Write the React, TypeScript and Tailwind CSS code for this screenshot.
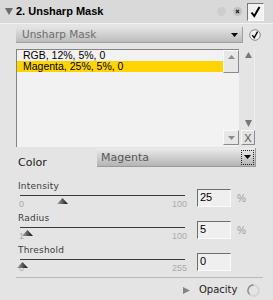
import React from 'react';

const Thumb: React.FC<{ id: string }> = ({ id }) => (
  <svg width="11" height="6" viewBox="0 0 11 6">
    <defs>
      <linearGradient id={id} x1="0" x2="1" y1="0" y2="0">
        <stop offset="0" stopColor="#a8a8a8" />
        <stop offset="1" stopColor="#0d0d0d" />
      </linearGradient>
    </defs>
    <path d="M0 6L5.5 0L11 6Z" fill={`url(#${id})`} />
  </svg>
);

type RowProps = { label: string; value: string; min: string; max: string; thumb: string; unit?: string; id: string };

const SliderRow: React.FC<RowProps> = ({ label, value, min, max, thumb, unit, id }) => (
  <div className="flex h-[32px]">
    <div className="ml-[18px] w-[170px] flex flex-col">
      <div className="text-[9px] leading-[11px] text-[#3c3c3c] tracking-[0.2px]">{label}</div>
      <div className="relative h-[21px]">
        <div className="absolute left-[2px] top-[3px] w-[165px] h-px bg-[#3a3a3a]" />
        <div className={`absolute top-[6px] ${thumb}`}>
          <Thumb id={id} />
        </div>
        <div className="mt-[7px] flex justify-between px-[1px] text-[9px] leading-[10px] text-[#ababab] font-['Liberation_Sans',sans-serif]">
          <span>{min}</span>
          <span>{max}</span>
        </div>
      </div>
    </div>
    <div className="ml-[9px] mt-[8px] w-[34px] h-[18px] border-t border-l border-t-[#6c6c6c] border-l-[#6c6c6c] border-r border-b border-r-[#fbfbfb] border-b-[#fbfbfb] bg-[#efefef] pl-[2px] pt-[1px] text-[11px] leading-[13px] text-black font-['Liberation_Sans',sans-serif]">
      {value}
    </div>
    {unit && <span className="ml-[6px] mt-[12px] text-[10px] leading-[11px] text-[#9c9c9c] font-['Liberation_Sans',sans-serif]">{unit}</span>}
  </div>
);

export default function App() {
  return (
    <div className="w-[273px] h-[300px] overflow-hidden bg-[#e4e4e4] font-['DejaVu_Sans',sans-serif] text-[#222] select-none">
      {/* panel header */}
      <div className="h-[24px] flex items-center bg-[#d9d9d9] border-b border-[#f3f3f3]">
        <svg className="ml-[5px]" width="8" height="7" viewBox="0 0 8 7">
          <path d="M0 0H8L4 7Z" fill="#6b6b6b" />
        </svg>
        <span className="ml-[3px] font-['Liberation_Sans',sans-serif] font-bold text-[11px] leading-[13px] text-black">2. Unsharp Mask</span>
        <div className="ml-auto mr-[9px] flex items-center">
          <span className="w-[9px] h-[9px] rounded-full bg-[#cdcdcd]" />
          <svg className="ml-[7px]" width="9" height="9" viewBox="0 0 9 9">
            <circle cx="4.5" cy="4.5" r="4.5" fill="#c2c2c2" />
            <path d="M3 3L6 6M6 3L3 6" stroke="#2a2a2a" strokeWidth="1.3" />
          </svg>
          <div className="ml-[5px] w-[17px] h-[18px] border-t border-l border-t-[#777] border-l-[#777] border-r border-b border-r-[#fafafa] border-b-[#fafafa] bg-[#f2f2f2] flex items-center justify-center">
            <svg width="11" height="12" viewBox="0 0 11 12">
              <path d="M1.5 6.5L4.3 10L9.5 1" fill="none" stroke="#000" strokeWidth="2" />
            </svg>
          </div>
        </div>
      </div>

      {/* filter type dropdown */}
      <div className="mt-[3px] flex items-center">
        <div className="ml-[16px] w-[227px] h-[16px] flex items-center bg-gradient-to-b from-[#e4e4e4] to-[#bcbcbc] border-r border-b border-[#a0a0a0]">
          <span className="pl-[6px] text-[10.5px] leading-[13px] text-[#6e6e6e]">Unsharp Mask</span>
          <svg className="ml-auto mr-[4px]" width="7" height="4" viewBox="0 0 7 4">
            <path d="M0 0H7L3.5 4Z" fill="#000" />
          </svg>
        </div>
        <svg className="ml-[6px]" width="12" height="12" viewBox="0 0 12 12">
          <circle cx="6" cy="6" r="5.3" fill="#f0f0f0" stroke="#8a8a8a" strokeWidth="1" />
          <path d="M3.3 6.2L5.2 8.8L8.6 2.6" fill="none" stroke="#000" strokeWidth="1.4" />
        </svg>
      </div>

      {/* preset list */}
      <div className="mt-[6px] flex h-[98px]">
        <div className="ml-[16px] w-[223px] h-full flex border-t border-l border-[#858585] bg-[#f2f2f2] font-['Liberation_Sans',sans-serif] text-[10.5px] leading-[11px] text-black">
          <div className="flex-1 flex flex-col">
            <div className="h-[11px] pl-[6px]">RGB, 12%, 5%, 0</div>
            <div className="h-[11px] pl-[6px] bg-[#ffd400]">Magenta, 25%, 5%, 0</div>
          </div>
          <div className="w-[16px] flex flex-col">
            <div className="h-[23px] border-t border-l border-t-[#fafafa] border-l-[#fafafa] border-r border-b border-r-[#8c8c8c] border-b-[#8c8c8c] bg-[#e7e7e7] flex justify-center pt-[4px]">
              <svg width="7" height="4" viewBox="0 0 7 4">
                <path d="M0 4H7L3.5 0Z" fill="#8c8c8c" />
              </svg>
            </div>
            <div className="flex-1" />
            <div className="h-[15px] border-t border-l border-t-[#fafafa] border-l-[#fafafa] border-r border-b border-r-[#8c8c8c] border-b-[#8c8c8c] bg-[#e7e7e7] flex items-center justify-center">
              <svg width="7" height="4" viewBox="0 0 7 4">
                <path d="M0 0H7L3.5 4Z" fill="#8c8c8c" />
              </svg>
            </div>
            <div className="h-[2px]" />
          </div>
        </div>
        <div className="w-[16px] flex flex-col border-r border-[#efefef]">
          <svg className="mt-[3px] ml-[6px]" width="7" height="6" viewBox="0 0 7 6">
            <path d="M0 6H7L3.5 0Z" fill="#777" />
          </svg>
          <div className="flex-1" />
          <svg className="ml-[6px]" width="7" height="7" viewBox="0 0 7 7">
            <path d="M0 0H7L3.5 7Z" fill="#777" />
          </svg>
          <div className="mt-[3px] ml-[2px] w-[14px] h-[15px] border-t border-l border-t-[#f8f8f8] border-l-[#f8f8f8] border-r border-b border-r-[#8c8c8c] border-b-[#8c8c8c] bg-[#e2e2e2] flex items-center justify-center font-['Liberation_Sans',sans-serif] text-[11px] leading-[12px] text-[#555]">
            X
          </div>
          <div className="h-[2px]" />
        </div>
      </div>

      {/* color channel */}
      <div className="mt-[1px] h-[19px] flex items-start">
        <span className="ml-[18px] mt-[8px] text-[11px] leading-[13px] text-[#222]">Color</span>
        <div className="ml-auto mr-[17px] w-[159px] h-[19px] flex items-center bg-gradient-to-b from-[#ececec] to-[#b4b4b4] border-b border-r border-[#9a9a9a]">
          <span className="pl-[4px] text-[11px] leading-[13px] text-[#575757]">Magenta</span>
          <div className="ml-auto mr-[1px] w-[13px] h-[15px] border border-dotted border-[#222] flex items-center justify-center">
            <svg width="7" height="4" viewBox="0 0 7 4">
              <path d="M0 0H7L3.5 4Z" fill="#000" />
            </svg>
          </div>
        </div>
      </div>

      {/* sliders */}
      <div className="mt-[14px]">
        <SliderRow id="t1" label="Intensity" value="25" min="0" max="100" thumb="left-[39px]" unit="%" />
        <SliderRow id="t2" label="Radius" value="5" min="1" max="100" thumb="left-[4px]" unit="%" />
        <SliderRow id="t3" label="Threshold" value="0" min="0" max="255" thumb="left-[-1px]" />
      </div>

      <div className="ml-[16px] w-[247px] h-px bg-[#b9b9b9]" />

      {/* opacity */}
      <div className="h-[22px] pt-[2px] flex items-center">
        <svg className="ml-[183px]" width="7" height="7" viewBox="0 0 7 7">
          <path d="M0 0L7 3.5L0 7Z" fill="#858585" />
        </svg>
        <span className="ml-[9px] text-[10px] leading-[12px] text-[#222]">Opacity</span>
        <svg className="ml-[10px]" width="13" height="13" viewBox="0 0 13 13">
          <circle cx="6.5" cy="6.5" r="5.5" fill="none" stroke="#d2d2d2" strokeWidth="1.5" />
          <path d="M6.5 1A5.5 5.5 0 0 0 2.6 10.4" fill="none" stroke="#8a8a8a" strokeWidth="1.3" />
        </svg>
      </div>
    </div>
  );
}
